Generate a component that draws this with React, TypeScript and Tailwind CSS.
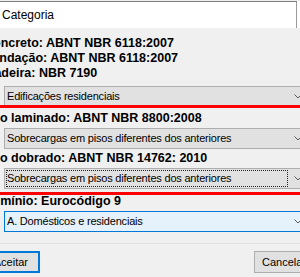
type ComboVariant = 'normal' | 'focus' | 'hover';

interface ComboProps {
  text: string;
  variant?: ComboVariant;
}

function Chevron() {
  return (
    <svg width="8" height="5" viewBox="0 0 8 5" className="block">
      <path d="M0.5 0.5 L4 4 L7.5 0.5" fill="none" stroke="#5a5a5a" strokeWidth="1" />
    </svg>
  );
}

function Combo({ text, variant = 'normal' }: ComboProps) {
  const box =
    variant === 'hover'
      ? 'border-[#0078d7] bg-[#e5f1fb]'
      : 'border-[#adadad] bg-[#e1e1e1]';

  return (
    <div className={`ml-[4px] w-[303px] h-[21px] border ${box} flex items-stretch text-[11px] tracking-[-0.2px] text-black`}>
      {variant === 'focus' ? (
        <div className="flex-1 m-px border border-dotted border-[#222] flex items-center whitespace-nowrap overflow-hidden">
          {text}
        </div>
      ) : (
        <div className="flex-1 pl-[2px] flex items-center whitespace-nowrap overflow-hidden">{text}</div>
      )}
      <div className="w-[17px] flex items-center justify-center">
        <Chevron />
      </div>
    </div>
  );
}

function Label({ children, className = '' }: { children: string; className?: string }) {
  return (
    <div className={`ml-[-16px] font-bold text-[12.5px] leading-[15px] whitespace-nowrap text-black ${className}`}>
      {children}
    </div>
  );
}

export default function App() {
  return (
    <div className="relative w-[300px] h-[277px] overflow-hidden bg-[#f0f0f0] font-['Liberation_Sans',Arial,sans-serif]">
      {/* title bar */}
      <div className="relative h-[27px] bg-white">
        <div className="h-px mt-px w-[297px] bg-[#7d7d7d]" />
        <div className="absolute right-[3px] top-px bottom-0 w-px bg-[#9a9a9a]" />
        <div className="pl-[2px] pt-[6px] text-[12px] leading-[14px] text-black">Categoria</div>
      </div>

      <div className="pt-[8px]">
        <Label>Concreto: ABNT NBR 6118:2007</Label>
        <Label>Fundação: ABNT NBR 6118:2007</Label>
        <Label>Madeira: NBR 7190</Label>

        <div className="mt-[5px]">
          <Combo text="Edificações residenciais" />
        </div>

        <Label className="mt-[4px]">Aço laminado: ABNT NBR 8800:2008</Label>
        <div className="mt-[2px]">
          <Combo text="Sobrecargas em pisos diferentes dos anteriores" />
        </div>

        <Label className="mt-[2px]">Aço dobrado: ABNT NBR 14762: 2010</Label>
        <div className="mt-[2px]">
          <Combo text="Sobrecargas em pisos diferentes dos anteriores" variant="focus" />
        </div>

        <Label className="mt-[5px] ml-[-20px]">Alumínio: Eurocódigo 9</Label>
        <div className="mt-[2px]">
          <Combo text="A. Domésticos e residenciais" variant="hover" />
        </div>

        <div className="mt-[11px] h-px bg-[#e2e2e2]" />

        <div className="mt-[7px] flex">
          <button className="shrink-0 ml-[-35px] w-[75px] h-[22px] border-2 border-[#0078d7] bg-[#e1e1e1] flex items-center justify-end pr-[10px] text-[11px] text-black">
            Aceitar
          </button>
          <button className="shrink-0 ml-[214px] w-[75px] h-[22px] border border-[#adadad] bg-[#e1e1e1] flex items-center pl-[7px] text-[11px] text-black">
            Cancelar
          </button>
        </div>
      </div>

      {/* red annotation lines drawn over the dialog */}
      <div className="absolute left-0 top-[105px] w-full h-[3px] bg-[#ff0000]" />
      <div className="absolute left-0 top-[192px] w-full h-[3px] bg-[#ff0000]" />
    </div>
  );
}
